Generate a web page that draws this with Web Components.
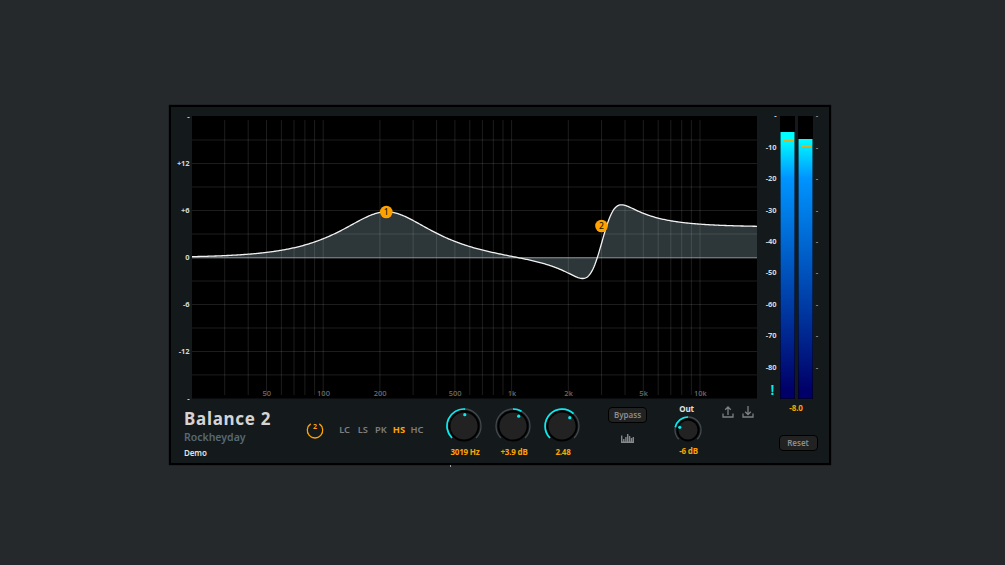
<!DOCTYPE html>
<html lang="en">
<head>
<meta charset="utf-8">
<title>Balance 2</title>
<style>
    html, body {
        height: 100%;
        margin: 0;
    }

    body {
        background: #25292c;
        font-family: "Noto Sans", "Open Sans", sans-serif;
    }
</style>
</head>
<body>
<eq-plugin></eq-plugin>

<script>
class EqGraph extends HTMLElement {
    constructor() {
        super();
        this.attachShadow({ mode: 'open' });
    }

    connectedCallback() {
        const xOf = (freq) => 20.5 + Math.log10(freq / 20) * 188.4;
        const yOf = (db) => 141.5 - db * 7.83;
        let grid = '';

        [30, 40, 50, 60, 70, 80, 90, 100, 200, 300, 400, 500, 600, 700, 800, 900, 1000,
            2000, 3000, 4000, 5000, 6000, 7000, 8000, 9000, 10000].forEach((freq) => {
            grid += `<path d="M${xOf(freq).toFixed(1)} 4V279"/>`;
        });

        for (let db = -15; db <= 15; db += 3) {
            grid += `<path d="M21 ${yOf(db).toFixed(1)}H586"/>`;
        }

        const freqLabels = [[50, '50'], [100, '100'], [200, '200'], [500, '500'], [1000, '1k'],
            [2000, '2k'], [5000, '5k'], [10000, '10k']]
            .map(([freq, text]) => `<text x="${(xOf(freq) + 0.3).toFixed(1)}" y="279.6">${text}</text>`).join('');

        const dbLabels = [[18, '-'], [12, '+12'], [6, '+6'], [0, '0'], [-6, '-6'], [-12, '-12'], [-18, '-']]
            .map(([db, text]) => `<text x="18.5" y="${(yOf(db) + 2.7).toFixed(1)}">${text}</text>`).join('');

        const points = [];
        for (let x = 21; x <= 586; x++) {
            const freq = 20 * Math.pow(10, (x - 20.5) / 188.4);
            const db = this.peak(freq, 217, 5.85, 0.707) + this.highShelf(freq, 3019, 3.9, 2.48);
            points.push(`${x} ${yOf(db).toFixed(2)}`);
        }
        const curve = `M${points.join('L')}`;

        this.shadowRoot.innerHTML = `
        <style>
            :host {
                display: block;
                width: 586px;
                height: 286px;
            }

            svg {
                display: block;
                overflow: visible;
            }

            .grid {
                stroke: #fff;
                stroke-opacity: 0.115;
                stroke-width: 1;
            }

            text {
                font-size: 7.5px;
            }

            .db {
                fill: #d5d7d7;
                font-weight: 700;
                letter-spacing: -0.1px;
                text-anchor: end;
            }

            .freq {
                fill: #707070;
                font-size: 7px;
                font-weight: 500;
                text-anchor: middle;
            }

            .node text {
                fill: #221800;
                font-size: 8.5px;
                font-weight: 500;
                text-anchor: middle;
            }
        </style>
        <svg width="586" height="286" viewBox="0 0 586 286">
            <rect x="21" width="565" height="282.5" fill="#000"/>
            <path d="${curve}V141.5H21Z" fill="#2d373a"/>
            <g class="grid">${grid}</g>
            <path d="M21 141.8H586" stroke="#899093" stroke-width="1"/>
            <path d="${curve}" fill="none" stroke="#f2f2f2" stroke-width="1.3" stroke-linejoin="round"/>
            <g class="freq">${freqLabels}</g>
            <g class="db">${dbLabels}</g>
            <g class="node">
                <circle cx="215.3" cy="96" r="6.3" fill="#ffa200"/><text x="215.3" y="99">1</text>
                <circle cx="430.5" cy="110" r="6.3" fill="#ffa200"/><text x="430.5" y="113">2</text>
            </g>
        </svg>`;
    }

    // filter magnitudes in dB
    peak(freq, center, gain, q) {
        const a = Math.pow(10, gain / 40);
        const w = freq / center;
        const re = 1 - w * w;
        return 20 * Math.log10(Math.hypot(re, w * a / q) / Math.hypot(re, w / (a * q)));
    }

    highShelf(freq, center, gain, q) {
        const a = Math.pow(10, gain / 40);
        const w = freq / center;
        const im = w * Math.sqrt(a) / q;
        return 20 * Math.log10(a * Math.hypot(1 - a * w * w, im) / Math.hypot(a - w * w, im));
    }
}

class LevelMeter extends HTMLElement {
    constructor() {
        super();
        this.attachShadow({ mode: 'open' });
    }

    connectedCallback() {
        let scale = '';
        for (let i = 0; i <= 8; i++) {
            const y = i * 31.4;
            scale += `<text class="label" x="19.5" y="${(y + 2.4).toFixed(1)}">${i ? -i * 10 : '-'}</text>`;
            scale += `<text x="58.7" y="${(y + 2.4).toFixed(1)}">-</text>`;
        }

        this.shadowRoot.innerHTML = `
        <style>
            :host {
                display: block;
                width: 72px;
                height: 286px;
            }

            svg {
                display: block;
                overflow: visible;
            }

            text {
                fill: #a0a3a4;
                font-size: 7.5px;
                font-weight: 600;
            }

            .label {
                fill: #d5d7d7;
                font-weight: 700;
                letter-spacing: -0.1px;
                text-anchor: end;
            }

            .alert {
                fill: #00f0f5;
                font-size: 14px;
                font-weight: 600;
            }
        </style>
        <svg width="72" height="286" viewBox="0 0 72 286">
            <defs>
                <linearGradient id="level" gradientUnits="userSpaceOnUse" x1="0" y1="0" x2="0" y2="283">
                    <stop offset="0.08" stop-color="#00ffff"/>
                    <stop offset="0.22" stop-color="#0094ff"/>
                    <stop offset="0.97" stop-color="#000068"/>
                </linearGradient>
            </defs>
            <rect x="23" width="15" height="283" fill="#000"/>
            <rect x="41" width="15" height="283" fill="#000"/>
            <rect x="23.5" y="16" width="14" height="266.5" fill="url(#level)"/>
            <rect x="41.5" y="23" width="14" height="259.5" fill="url(#level)"/>
            <rect x="26" y="24" width="10" height="2" fill="#e0ac22"/>
            <rect x="44" y="29" width="10" height="2" fill="#e0ac22"/>
            ${scale}
            <text class="alert" x="13.4" y="278.8">!</text>
        </svg>`;
    }
}

class EqKnob extends HTMLElement {
    constructor() {
        super();
        this.attachShadow({ mode: 'open' });
    }

    connectedCallback() {
        const r = Number(this.getAttribute('radius'));
        const from = Number(this.getAttribute('from'));
        const to = Number(this.getAttribute('to'));
        const size = r * 2 + 2;
        const dot = this.point(r * 0.67, Number(this.getAttribute('dot')));

        this.shadowRoot.innerHTML = `
        <style>
            :host {
                display: flex;
                flex-direction: column;
                align-items: center;
                color: #ffa200;
                font-size: 8px;
                font-weight: 700;
                letter-spacing: -0.2px;
                line-height: 10px;
                white-space: nowrap;
            }

            svg {
                display: block;
            }
        </style>
        <slot name="label"></slot>
        <svg width="${size}" height="${size}" viewBox="${-size / 2} ${-size / 2} ${size} ${size}" fill="none">
            <path d="${this.arc(r, -135, 135)}" stroke="#42484c" stroke-width="1.3"/>
            <path d="${this.arc(r, from, to)}" stroke="#00eff2" stroke-width="1.7"/>
            <circle r="${r - 1.6}" fill="#000"/>
            <circle r="${r - 3.4}" fill="#222"/>
            <circle cx="${dot.x}" cy="${dot.y}" r="1.6" fill="#00eff2"/>
        </svg>
        <slot></slot>`;
    }

    // degrees run clockwise from twelve o'clock
    point(r, deg) {
        const a = deg * Math.PI / 180;
        return { x: (r * Math.sin(a)).toFixed(2), y: (-r * Math.cos(a)).toFixed(2) };
    }

    arc(r, from, to) {
        const a = this.point(r, from);
        const b = this.point(r, to);
        return `M${a.x} ${a.y}A${r} ${r} 0 ${to - from > 180 ? 1 : 0} 1 ${b.x} ${b.y}`;
    }
}

class EqButton extends HTMLElement {
    constructor() {
        super();
        this.attachShadow({ mode: 'open' });
        this.shadowRoot.innerHTML = `
        <style>
            :host {
                display: block;
            }

            button {
                display: block;
                box-sizing: border-box;
                width: 39px;
                height: 16px;
                padding: 0;
                border: 1px solid #000;
                border-radius: 4px;
                background: #222;
                color: #8c8c8c;
                font: 600 8px/13px "Noto Sans", sans-serif;
            }
        </style>
        <button type="button"><slot></slot></button>`;
    }
}

class FilterTypes extends HTMLElement {
    constructor() {
        super();
        this.attachShadow({ mode: 'open' });
    }

    connectedCallback() {
        const active = this.getAttribute('active');
        const items = ['LC', 'LS', 'PK', 'HS', 'HC']
            .map((type) => `<span class="${type === active ? 'active' : ''}">${type}</span>`).join('');

        this.shadowRoot.innerHTML = `
        <style>
            :host {
                display: grid;
                grid-template-columns: repeat(5, 18.1px);
                color: #7e7e7e;
                font-size: 9.3px;
                font-weight: 600;
                line-height: 12px;
                text-align: center;
            }

            .active {
                color: #ffa200;
                font-weight: 700;
            }
        </style>
        ${items}`;
    }
}

class EqPlugin extends HTMLElement {
    constructor() {
        super();
        this.attachShadow({ mode: 'open' });
        this.shadowRoot.innerHTML = `
        <style>
            :host {
                display: block;
                box-sizing: border-box;
                width: 1005px;
                height: 565px;
                padding: 105px 0 0 169px;
            }

            .panel {
                position: relative;
                box-sizing: border-box;
                width: 662px;
                height: 360px;
                border: 2px solid #000;
                background: #14191c;
                box-shadow: 0 0 1px #000;
            }

            /* light speck on the lower edge */
            .panel::after {
                content: "";
                position: absolute;
                left: 279px;
                top: 358px;
                width: 1px;
                height: 2px;
                background: #a0a2a3;
            }

            .display {
                display: flex;
                height: 292px;
                box-sizing: border-box;
                padding-top: 9px;
            }

            .controls {
                display: grid;
                grid-template-columns: 128px 34px 106px 147px 83px 37px 65px 56px;
                align-items: start;
            }

            .brand {
                padding: 8px 0 0 13px;
                white-space: nowrap;
            }

            h1, p {
                margin: 0;
            }

            h1 {
                color: #d4d4d4;
                font-size: 17px;
                font-weight: 700;
                letter-spacing: 0.7px;
                line-height: 23px;
            }

            .maker {
                color: #566974;
                font-size: 10.5px;
                font-weight: 600;
                line-height: 15px;
            }

            .edition {
                color: #e2e2e2;
                font-size: 8px;
                font-weight: 600;
                letter-spacing: -0.1px;
                line-height: 15px;
            }

            .power {
                padding: 22px 0 0 7px;
            }

            filter-types {
                padding: 25px 0 0 2.6px;
            }

            .knobs {
                display: grid;
                grid-template-columns: repeat(3, 49px);
                padding-top: 9px;
            }

            .knobs span {
                margin: 3px 0 0 3px;
            }

            .side {
                display: flex;
                flex-direction: column;
                align-items: center;
                gap: 11px;
                padding-top: 7.5px;
            }

            .output {
                padding-top: 5px;
            }

            .output [slot] {
                color: #e2e2e2;
                margin: 0 0 2px -2px;
            }

            .output .value {
                margin: 2px 0 0 2px;
            }

            .files {
                display: flex;
                gap: 8px;
                padding: 6.5px 0 0 16px;
            }

            svg {
                display: block;
            }

            .meter {
                display: flex;
                flex-direction: column;
                align-items: center;
                gap: 21.5px;
                padding-top: 3px;
                margin-left: -2px;
                color: #ffa200;
                font-size: 8px;
                font-weight: 700;
                letter-spacing: -0.1px;
                line-height: 11px;
            }

            .meter span {
                margin-left: -4px;
            }
        </style>
        <main class="panel">
            <section class="display">
                <eq-graph></eq-graph>
                <level-meter></level-meter>
            </section>
            <section class="controls">
                <div class="brand">
                    <h1>Balance 2</h1>
                    <p class="maker">Rockheyday</p>
                    <p class="edition">Demo</p>
                </div>
                <div class="power">
                    <svg width="18" height="19" viewBox="0 0 18 19">
                        <path d="M4.7 2.9A7.7 7.7 0 1 0 13.3 2.9" fill="none" stroke="#ffa200" stroke-width="1.3"/>
                        <text x="9" y="8" text-anchor="middle" font-size="7" font-weight="700" fill="#ffa200">2</text>
                    </svg>
                </div>
                <filter-types active="HS"></filter-types>
                <div class="knobs">
                    <eq-knob radius="17" from="-135" to="4" dot="4"><span>3019 Hz</span></eq-knob>
                    <eq-knob radius="17" from="0" to="30" dot="30"><span>+3.9 dB</span></eq-knob>
                    <eq-knob radius="17" from="-135" to="43" dot="43"><span>2.48</span></eq-knob>
                </div>
                <div class="side">
                    <eq-button>Bypass</eq-button>
                    <svg width="13" height="9" viewBox="0 0 13 9" fill="none" stroke="#858789" stroke-width="1.4">
                        <path d="M0 8.2H13M.7 1.5V8M2.8 5V8M4.9 3V8M6.7 0V8M8.6 2V8M10.5 4V8M12.3 3V8"/>
                    </svg>
                </div>
                <div class="output">
                    <eq-knob radius="13" from="-78" to="0" dot="-72">
                        <span slot="label">Out</span>
                        <span class="value">-6 dB</span>
                    </eq-knob>
                </div>
                <div class="files">
                    <svg width="12" height="12" viewBox="0 0 12 12" fill="none" stroke="#7d8082" stroke-width="1.3">
                        <path d="M1 7.5V11H11V7.5M6 9V1M3.2 3.8L6 1L8.8 3.8"/>
                    </svg>
                    <svg width="12" height="12" viewBox="0 0 12 12" fill="none" stroke="#7d8082" stroke-width="1.3">
                        <path d="M1 7.5V11H11V7.5M6 0V8.5M3.2 5.7L6 8.5L8.8 5.7"/>
                    </svg>
                </div>
                <div class="meter">
                    <span>-8.0</span>
                    <eq-button>Reset</eq-button>
                </div>
            </section>
        </main>`;
    }
}

customElements.define('eq-graph', EqGraph);
customElements.define('level-meter', LevelMeter);
customElements.define('eq-knob', EqKnob);
customElements.define('eq-button', EqButton);
customElements.define('filter-types', FilterTypes);
customElements.define('eq-plugin', EqPlugin);
</script>
</body>
</html>
